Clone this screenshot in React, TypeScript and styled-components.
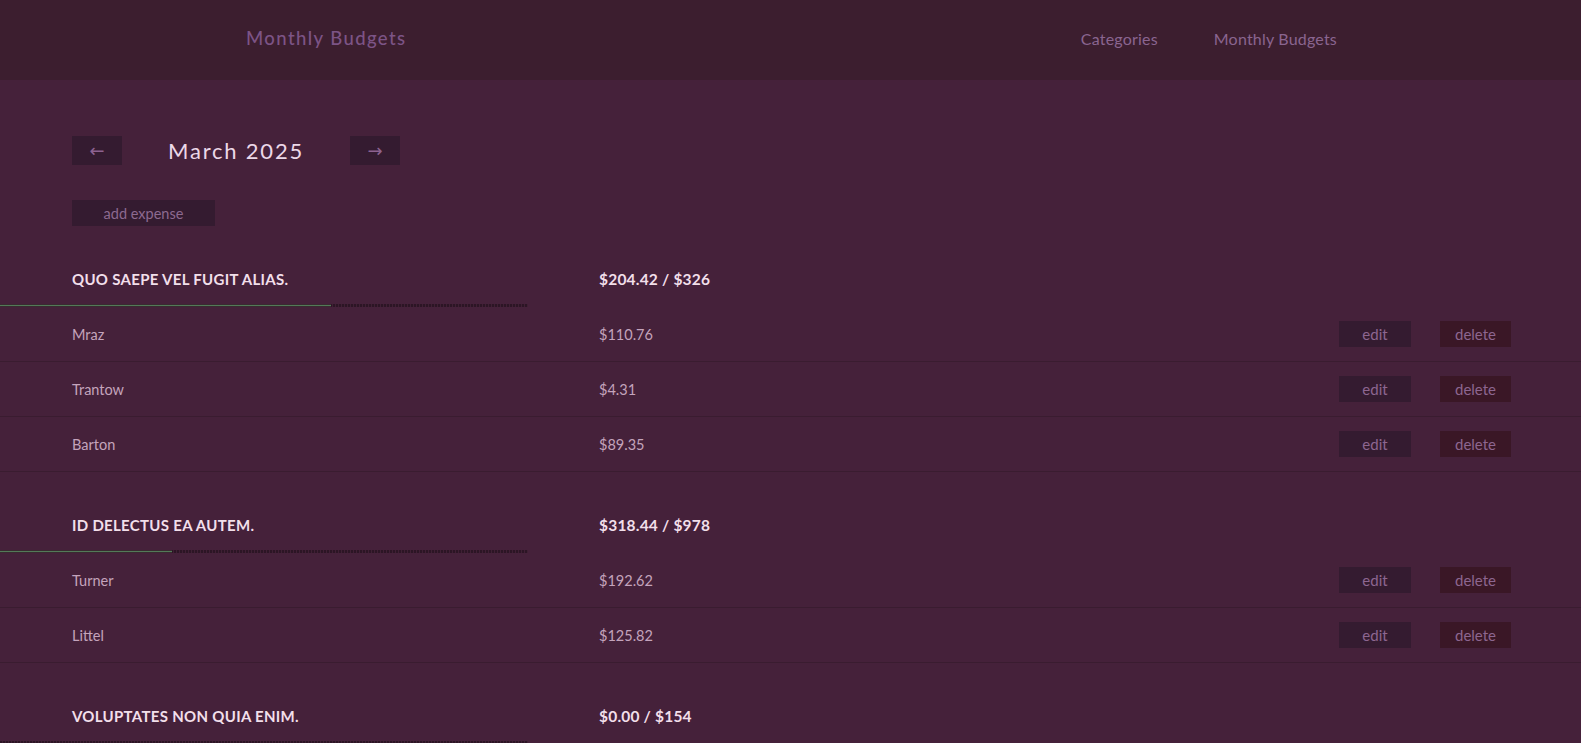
import React from "react";
import styled, { createGlobalStyle } from "styled-components";

const GlobalStyle = createGlobalStyle`
  html, body { margin: 0; padding: 0; background: #45213a; }
  body { font-family: Lato, "Noto Sans", sans-serif; }
  * { box-sizing: border-box; }
`;

const Page = styled.div`
  min-height: 100vh;
  background: #45213a;
  color: #c4a4bc;
`;

const Header = styled.header`
  height: 80px;
  background: #3c1e2f;
  display: flex;
  align-items: center;
  justify-content: space-between;
  padding: 0 244px 4px 246px;
`;

const Brand = styled.div`
  font-size: 18.5px;
  letter-spacing: 1.4px;
  color: #7c5486;
  font-weight: 500;
`;

const Nav = styled.nav`
  display: flex;
  gap: 56px;
`;

const NavLink = styled.a`
  font-size: 16px;
  color: #8a6590;
  text-decoration: none;
  letter-spacing: 0.2px;
`;

const Main = styled.main`
  padding-top: 56px;
`;

const MonthBar = styled.div`
  display: flex;
  align-items: center;
  gap: 46px;
  padding-left: 72px;
`;

const ArrowButton = styled.button`
  width: 50px;
  height: 29px;
  border: none;
  background: #341b30;
  color: #8d6290;
  font-size: 18px;
  font-family: "DejaVu Sans", sans-serif;
  display: flex;
  align-items: center;
  justify-content: center;
  padding: 0;
`;

const MonthTitle = styled.h1`
  margin: 0;
  font-size: 22px;
  font-weight: 400;
  letter-spacing: 1.8px;
  color: #ecd8e8;
`;

const Toolbar = styled.div`
  padding: 35px 0 0 72px;
`;

const AddButton = styled.button`
  width: 143px;
  height: 26px;
  border: none;
  background: #341b30;
  color: #8d6a90;
  font-family: Lato, "Noto Sans", sans-serif;
  font-size: 14.5px;
  padding: 0;
`;

const Group = styled.section``;

const GroupHead = styled.div`
  display: grid;
  grid-template-columns: 527px 1fr;
  padding: 40px 0 0 72px;
  line-height: 26px;
  font-size: 15.5px;
  font-weight: 700;
  letter-spacing: 0.2px;
  color: #f2dfea;
`;

const GroupName = styled.h2`
  margin: 0;
  font-size: 15px;
  font-weight: 700;
  text-transform: uppercase;
  letter-spacing: 0.3px;
`;

const Track = styled.div`
  margin-top: 12px;
  width: 33.4%;
  height: 3px;
  background: repeating-linear-gradient(90deg, #2c1525 0 2px, #3f1f34 2px 3px);
`;

const Fill = styled.div`
  height: 3px;
  background: linear-gradient(#3a2a31 0 1px, #537a58 1px 2px, #3a2a31 2px 3px);
`;

const Row = styled.div`
  display: grid;
  grid-template-columns: 527px 1fr auto auto;
  align-items: center;
  height: 55px;
  padding: 0 70px 0 72px;
  border-bottom: 1px solid #3a1c30;
  font-size: 14.5px;
  color: #c4a4bc;
`;

const ActionButton = styled.button<{ $danger?: boolean }>`
  width: ${(p) => (p.$danger ? 71 : 72)}px;
  height: 26px;
  margin-left: ${(p) => (p.$danger ? 29 : 0)}px;
  border: none;
  padding: 0;
  background: ${(p) => (p.$danger ? "#3a1726" : "#341b30")};
  color: #8d6690;
  font-family: Lato, "Noto Sans", sans-serif;
  font-size: 15px;
`;

const groups = [
  {
    name: "Quo saepe vel fugit alias.",
    spent: 204.42,
    budget: 326,
    items: [
      { name: "Mraz", amount: 110.76 },
      { name: "Trantow", amount: 4.31 },
      { name: "Barton", amount: 89.35 },
    ],
  },
  {
    name: "Id delectus ea autem.",
    spent: 318.44,
    budget: 978,
    items: [
      { name: "Turner", amount: 192.62 },
      { name: "Littel", amount: 125.82 },
    ],
  },
  {
    name: "Voluptates non quia enim.",
    spent: 0,
    budget: 154,
    items: [],
  },
];

export default function App() {
  return (
    <>
      <GlobalStyle />
      <Page>
        <Header>
          <Brand>Monthly Budgets</Brand>
          <Nav>
            <NavLink>Categories</NavLink>
            <NavLink>Monthly Budgets</NavLink>
          </Nav>
        </Header>
        <Main>
          <MonthBar>
            <ArrowButton>←</ArrowButton>
            <MonthTitle>March 2025</MonthTitle>
            <ArrowButton>→</ArrowButton>
          </MonthBar>
          <Toolbar>
            <AddButton>add expense</AddButton>
          </Toolbar>
          {groups.map((g) => (
            <Group key={g.name}>
              <GroupHead>
                <GroupName>{g.name}</GroupName>
                <span>
                  ${g.spent.toFixed(2)} / ${g.budget}
                </span>
              </GroupHead>
              <Track>
                <Fill style={{ width: `${(g.spent / g.budget) * 100}%` }} />
              </Track>
              {g.items.map((it) => (
                <Row key={it.name}>
                  <span>{it.name}</span>
                  <span>${it.amount.toFixed(2)}</span>
                  <ActionButton>edit</ActionButton>
                  <ActionButton $danger>delete</ActionButton>
                </Row>
              ))}
            </Group>
          ))}
        </Main>
      </Page>
    </>
  );
}
